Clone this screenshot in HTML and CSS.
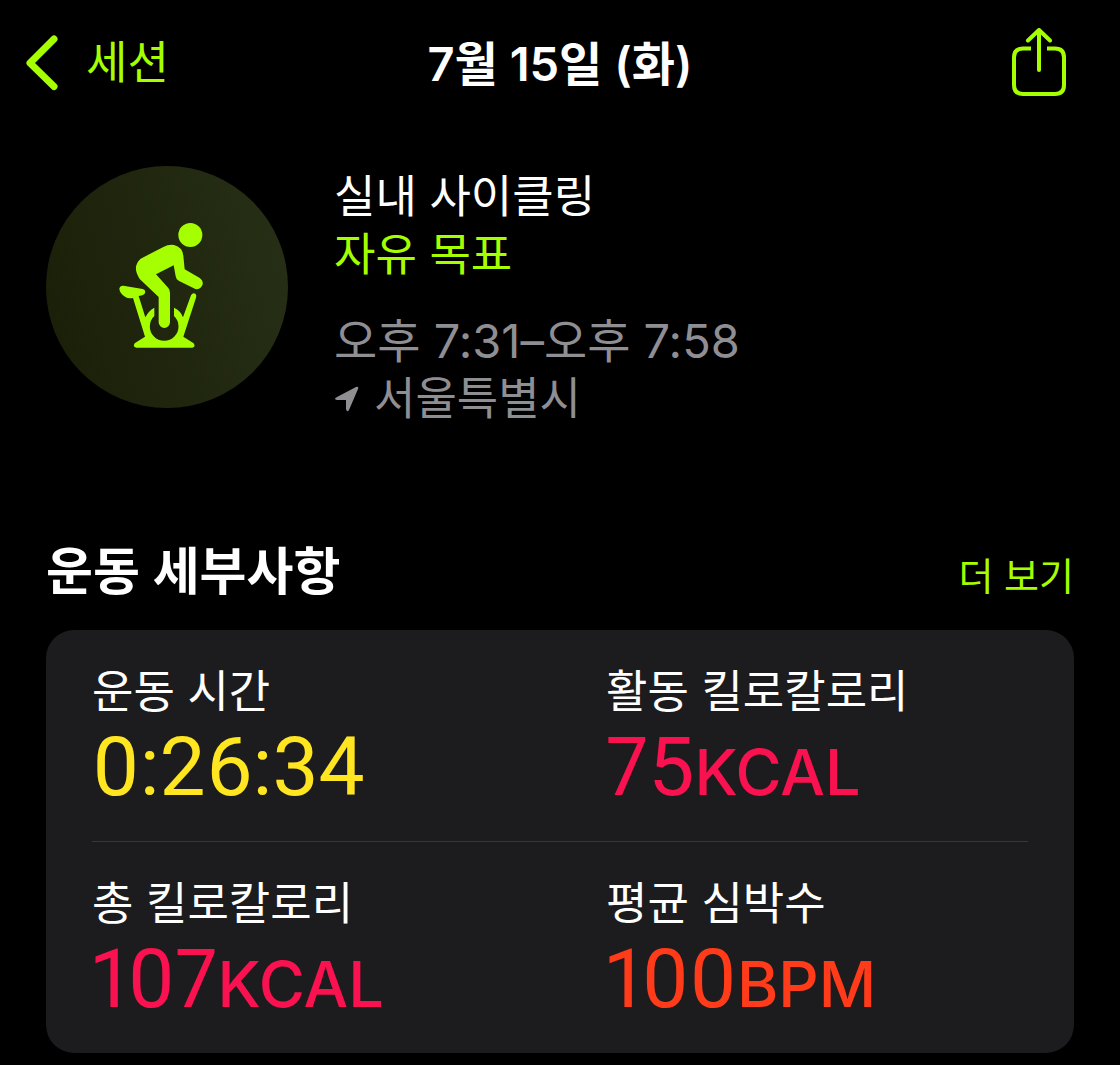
FILE: index.html
```html
<!DOCTYPE html>
<html lang="ko">
<head>
<meta charset="utf-8">
<meta name="viewport" content="width=device-width, initial-scale=1">
<title>7월 15일 (화)</title>
<link rel="stylesheet" href="styles.css">
</head>
<body>
<header class="nav">
  <a class="back" href="#sessions">
    <svg width="34" height="56" viewBox="0 0 34 56" aria-hidden="true"><path d="M29 4 5 28 29 51.500" fill="none" stroke="currentColor" stroke-width="7" stroke-linecap="round" stroke-linejoin="round"/></svg>
    <span>세션</span>
  </a>
  <h1 class="title">7월 15일 (화)</h1>
  <button class="share" type="button" aria-label="공유">
    <svg width="56" height="70" viewBox="0 0 56 70" aria-hidden="true" fill="none" stroke="currentColor" stroke-width="4" stroke-linecap="round" stroke-linejoin="round"><path d="M20 20.500H12Q3 20.500 3 29.500V57Q3 66 12 66H44Q53 66 53 57V29.500Q53 20.500 44 20.500H36" stroke-linecap="butt"/><path d="M28 42V3M17 12.500 28 2 39 12.500"/></svg>
  </button>
</header>
<main>
  <section class="summary">
    <div class="badge">
      <svg width="130" height="150" viewBox="6 6 390 450" aria-hidden="true">
        <g fill="currentColor">
          <circle cx="271" cy="75" r="36"/>
          <path d="M122 146 190 111Q207 102 222 105Q247 111 250 137L254 178 298 203Q310 211 308 223Q303 240 286 237L236 212Q228 208 227 199L221 166 168 193 205 234Q210 240 210 249V337A17 17 0 0 1 176 337V261L119 207Q95 170 122 146Z"/>
          <path d="M70 227 128 237Q136 239 136 246Q135 254 127 256L116 258 136 322Q145 303 163 293V318A43 43 0 1 0 222 318V293Q243 303 249 322L273 256Q278 247 286 251Q291 255 288 263L250 380 281 400Q288 411 277 413H109Q97 411 104 400L135 380 99 264Q84 266 76 261Q59 250 58 236Q60 226 70 227Z"/>
        </g>
      </svg>
    </div>
    <div class="info">
      <p>실내 사이클링</p>
      <p class="goal">자유 목표</p>
      <p class="time">오후 7:31–오후 7:58</p>
      <p class="place">
        <svg width="26" height="26" viewBox="0 0 26 26" aria-hidden="true"><path d="M3 11 22 1Q25 0 24 3L15 24Q13 27 12 23V14H3Q-1 13 3 11Z" fill="currentColor"/></svg>
        <span>서울특별시</span>
      </p>
    </div>
  </section>
  <section class="details">
    <div class="heading">
      <h2>운동 세부사항</h2>
      <a class="more" href="#details">더 보기</a>
    </div>
    <dl class="card">
      <div class="metric"><dt>운동 시간</dt><dd class="yellow">0:26:34</dd></div>
      <div class="metric"><dt>활동 킬로칼로리</dt><dd class="pink">75<span class="unit">KCAL</span></dd></div>
      <div class="metric"><dt>총 킬로칼로리</dt><dd class="pink">107<span class="unit">KCAL</span></dd></div>
      <div class="metric"><dt>평균 심박수</dt><dd class="red">100<span class="unit">BPM</span></dd></div>
    </dl>
  </section>
</main>
</body>
</html>
```
FILE: styles.css
```css
* { box-sizing: border-box; }
body {
  margin: 0;
  background: #000;
  color: #fff;
  font-family: Inter, "Noto Sans CJK KR", sans-serif;
  font-size: 45px;
  line-height: 58px;
}
h1, h2, p, dl, dd { margin: 0; }
a { color: inherit; text-decoration: none; }
svg { display: block; }

.nav {
  display: grid;
  grid-template-columns: 1fr auto 1fr;
  align-items: center;
  height: 126px;
  padding: 0 53px 0 25px;
}
.back { display: flex; align-items: center; gap: 27px; color: #a6ff00; }
.title { padding: 2px 0 0 28px; font-size: 47px; font-weight: 600; }
.share {
  justify-self: end;
  padding: 0;
  border: 0;
  background: none;
  color: #a6ff00;
}

.summary { display: flex; gap: 46px; padding: 40px 46px 0; }
.badge {
  display: grid;
  place-items: center;
  flex: none;
  width: 242px;
  height: 242px;
  border-radius: 50%;
  background: linear-gradient(75deg, #1a1e08, #273016);
  color: #a6ff00;
}
.info { padding-top: 2px; }
.goal { color: #a6ff00; }
.time { margin-top: 28px; font-size: 47px; }
.time, .place { color: #8e8e93; }
.place { display: flex; align-items: center; gap: 14px; }

.details { padding: 105px 46px 12px; }
.heading { display: flex; justify-content: space-between; align-items: baseline; }
h2 { font-size: 51px; font-weight: 600; line-height: 78px; }
.more { color: #a6ff00; font-size: 38px; }
.card {
  display: grid;
  grid-template-columns: 1fr 1fr;
  column-gap: 92px;
  margin-top: 19px;
  padding: 0 46px;
  border-radius: 28px;
  background: #1c1c1e;
}
/* Divider between the two rows of metrics */
.card::after {
  content: "";
  grid-column: 1 / -1;
  order: 1;
  height: 1px;
  background: #363639;
}
.metric { padding: 33px 0 28px; }
.metric:nth-child(n+3) { order: 2; }
dd {
  font-family: Roboto, sans-serif;
  font-size: 82px;
  font-variant-numeric: proportional-nums;
  line-height: 92px;
  white-space: nowrap;
}
.unit { font-family: Inter, sans-serif; font-size: 63px; font-weight: 500; line-height: 1; }
.yellow { color: #ffe620; }
.pink { color: #fa114f; }
.red { color: #ff3b1a; }
```
